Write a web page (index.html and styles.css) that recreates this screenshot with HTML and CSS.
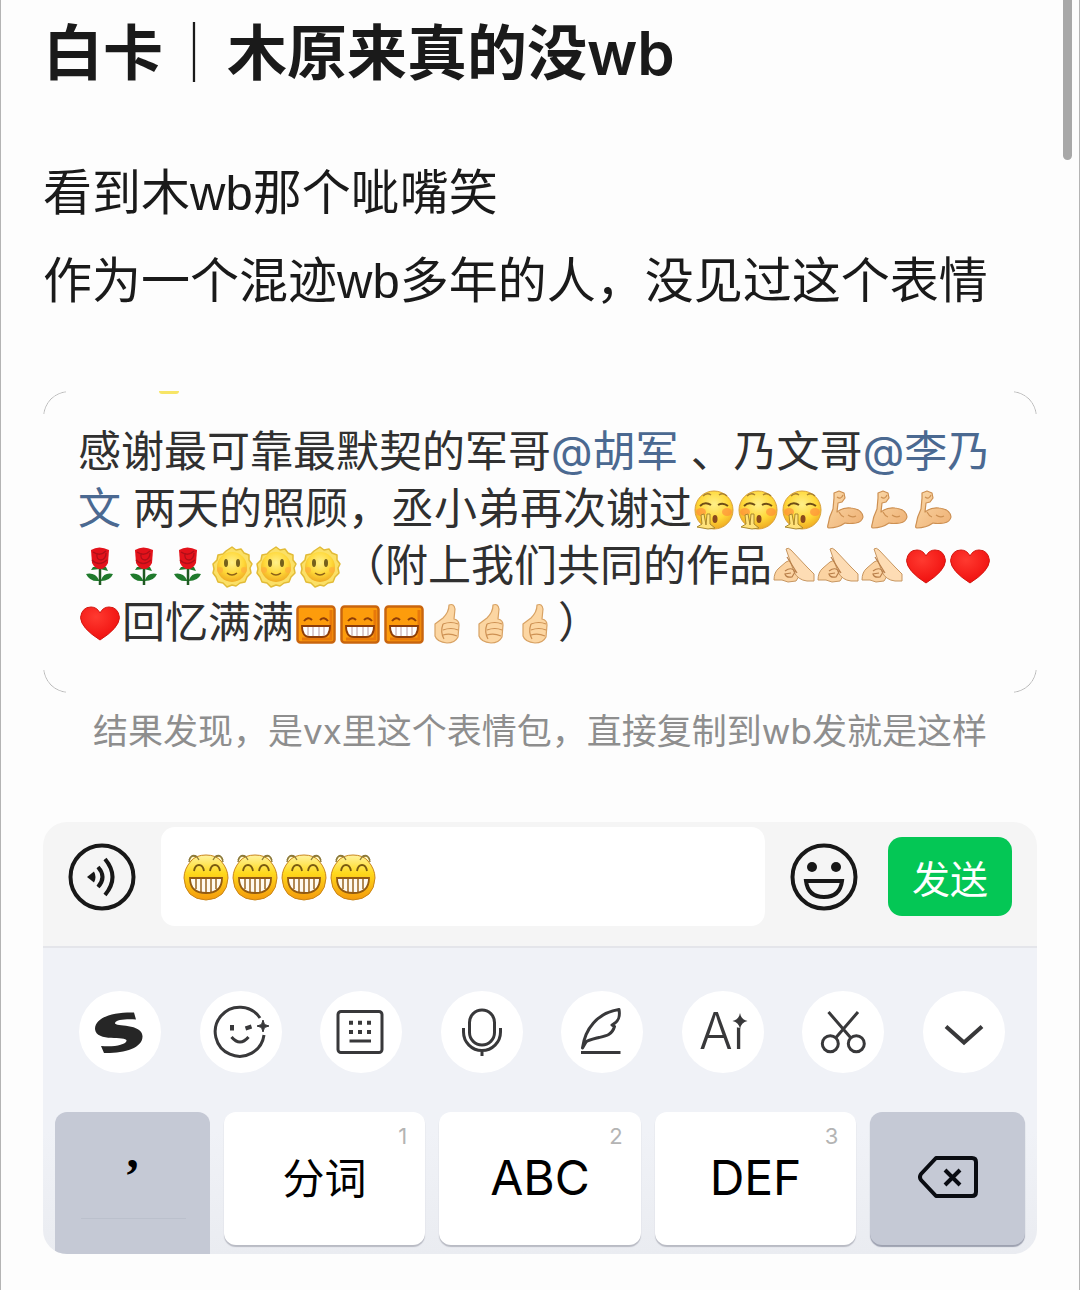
FILE: index.html
```html
<!DOCTYPE html>
<html lang="zh-CN">

<head>
    <meta charset="UTF-8">
    <meta name="viewport" content="width=device-width, initial-scale=1.0">
    <title>白卡｜木原来真的没wb</title>
    <link rel="stylesheet" href="styles.css">
</head>

<body>
    <!-- 表情图形 -->
    <svg class="sprite" aria-hidden="true">
        <defs>
            <radialGradient id="g-face" cx=".5" cy=".35" r=".65">
                <stop offset="0" stop-color="#fff08a" />
                <stop offset=".6" stop-color="#ffd838" />
                <stop offset="1" stop-color="#efaa22" />
            </radialGradient>
            <linearGradient id="g-grin" x1="0" y1="0" x2="0" y2="1">
                <stop offset="0" stop-color="#fff3a0" />
                <stop offset=".4" stop-color="#ffd91c" />
                <stop offset="1" stop-color="#f49a0c" />
            </linearGradient>
            <linearGradient id="g-skin" x1="0" y1="0" x2="1" y2="1">
                <stop offset="0" stop-color="#fbd9a8" />
                <stop offset="1" stop-color="#eeb074" />
            </linearGradient>
            <radialGradient id="g-heart" cx=".4" cy=".3" r=".8">
                <stop offset="0" stop-color="#ff3a30" />
                <stop offset="1" stop-color="#ee0a0a" />
            </radialGradient>
        </defs>
        <symbol id="e-shout" viewBox="0 0 44 44">
            <circle cx="22" cy="22" r="19" fill="url(#g-face)" stroke="#d9a13a" stroke-width="1" />
            <ellipse cx="9" cy="24" rx="5" ry="4" fill="#ff8a3c" opacity=".65" />
            <ellipse cx="35" cy="24" rx="5" ry="4" fill="#ff8a3c" opacity=".65" />
            <path d="M11 8q4-4 8-1M27 7q4-3 8 1" fill="none" stroke="#a9802f" stroke-width="1.5" />
            <path d="M8 18q5-5 11-1M26 17q5-3 10 1" fill="none" stroke="#6d4d16" stroke-width="2" />
            <ellipse cx="23" cy="31" rx="2.5" ry="4" fill="#8a4a1c" />
            <path d="M5 39l5-3-1-9 3-1 2 11 1-11 3 0v10l5 4-7 1z" fill="#ffe27a" stroke="#a9882f" stroke-width="1" />
        </symbol>
        <symbol id="e-arm" viewBox="0 0 44 44">
            <path d="M10 5l5-2 5 2 1 5-3 4-4 1-1 9q6-5 14-4 11 1 12 9-1 5-7 6-7 1-11 0-7 5-16 5-2 0-1-3 1-8 5-16l1-11z" fill="url(#g-skin)" stroke="#cd9052" stroke-width="1.2" stroke-linejoin="round" />
            <path d="M13 9q4 3 6-2M15 24q2 4 5 5M24 27q4 3 8 1" fill="none" stroke="#cd9052" stroke-width="1.2" />
        </symbol>
        <symbol id="e-rose" viewBox="0 0 44 44">
            <path d="M22 24v16" stroke="#1f5a22" stroke-width="2.5" />
            <path d="M21 36q-9 1-13-7 9-2 13 6zM23 36q9 0 12-7-9-2-12 6z" fill="#1f7a2c" />
            <path d="M15 22l-2 3 9-1 8 2-2-4z" fill="#1f7a2c" />
            <path d="M13 5q8-5 18 0l-1 13q-3 6-8 6t-8-6z" fill="#e3121b" />
            <path d="M15 7q7 5 13-1M19 8q-1 7 4 7 5-1 5-7M14 15q7 7 15 0" fill="none" stroke="#b00f18" stroke-width="1.3" />
        </symbol>
        <symbol id="e-sun" viewBox="0 0 44 44">
            <path d="M22 2l4 3 5-1 3 4 5 2v5l3 4-2 4 1 5-4 4-2 5-5 1-4 3-4-1-5 2-4-4-5-1-2-5-3-4 1-4-1-5 4-4 1-5 5-1 3-3z" fill="#fbe067" stroke="#e2bb36" stroke-width="1.5" stroke-linejoin="round" />
            <circle cx="22" cy="22" r="15" fill="url(#g-face)" />
            <ellipse cx="10" cy="25" rx="3" ry="3" fill="#ffae3c" opacity=".7" />
            <ellipse cx="34" cy="25" rx="3" ry="3" fill="#ffae3c" opacity=".7" />
            <ellipse cx="16" cy="18" rx="2" ry="4" fill="#75601c" />
            <ellipse cx="28" cy="18" rx="2" ry="4" fill="#75601c" />
            <path d="M17 28q5 4 10 0" fill="none" stroke="#8d6218" stroke-width="1.5" />
        </symbol>
        <symbol id="e-palm" viewBox="0 0 44 44">
            <path d="M2 35q0-8 5-12l7-6q5-3 9 1l6 10-5 8-8 1-6-2z" fill="#fbd3a2" stroke="#c79660" stroke-width="1" />
            <path d="M14 4q2-2 5 1l16 17 7 7v7h-7q-9-1-13-9z" fill="#fddcb4" stroke="#c79660" stroke-width="1" stroke-linejoin="round" />
            <path d="M13 26q7-5 10 1l-3 5q-6 1-7-3l6-1M15 12l10 16" fill="none" stroke="#b97f4a" stroke-width="1.2" />
        </symbol>
        <symbol id="e-heart" viewBox="0 0 44 44">
            <path d="M22 38Q3 26 2.500 15.500 4 5 13 5q6 0 9 6 3-6 9-6 9 0 10.500 10.500Q41 26 22 38z" fill="url(#g-heart)" stroke="#d3160f" stroke-width="1" />
        </symbol>
        <symbol id="e-box" viewBox="0 0 44 44">
            <rect x="3.500" y="4.500" width="37" height="36" rx="3" fill="#fd9c0c" stroke="#c9650e" stroke-width="2.500" />
            <path d="M37 8v29H8" fill="none" stroke="#e8780a" stroke-width="3" />
            <path d="M10 19q4-5 8-1M26 18q4-4 8 1" fill="none" stroke="#8e3d08" stroke-width="2" />
            <path d="M8 24h28q0 11-8 11H16q-8 0-8-11z" fill="#fff" stroke="#8e3d08" stroke-width="1.800" />
            <path d="M14 25v8M19 25v9M25 25v9M30 25v8" stroke="#b99aa0" stroke-width="1" />
        </symbol>
        <symbol id="e-thumb" viewBox="0 0 44 44">
            <path d="M9 22l8-6q6-6 6-13 5-2 6 4l-1 10q5 1 5 6l-1 12q-3 6-11 6-10-1-12-7z" fill="#fcd6a2" stroke="#d8a264" stroke-width="1.2" stroke-linejoin="round" />
            <path d="M17 22q8-3 15 0M17 28q8-3 15 0M17 33q7-2 14 1M17 22q-3 8 1 15" fill="none" stroke="#cd9052" stroke-width="1.2" />
        </symbol>
        <symbol id="e-grin" viewBox="0 0 46 48">
            <path d="M6 9q1-8 7-6l3 5M40 9q-1-8-7-6l-3 5" fill="#fff6c0" stroke="#8d7a3a" stroke-width="1.500" />
            <path d="M8 8q5-6 15-6t15 6q7 8 7 17-1 21-22 22Q2 46 1 25 1 16 8 8z" fill="url(#g-grin)" stroke="#c9851a" stroke-width="1" />
            <path d="M6 7q2-6 8-3l2 3M40 7q-2-6-8-3l-2 3" fill="none" stroke="#8d7a3a" stroke-width="1.300" />
            <path d="M11 18q1-6 5-6t5 6M27 18q1-6 5-6t5 6" fill="none" stroke="#7a5b10" stroke-width="1.800" />
            <path d="M7 25h32q0 15-16 15T7 25z" fill="#fffaf0" stroke="#925a12" stroke-width="1.800" />
            <path d="M13 26v10M18 26v13M23 26v14M28 26v13M33 26v10" stroke="#925a12" stroke-width="1.400" />
        </symbol>
    </svg>

    <main class="page">
        <div class="scroll-thumb"></div>
        <h1 class="title">白卡<span>｜</span>木原来真的没wb</h1>
        <div class="content">
            <p>看到木wb那个呲嘴笑</p>
            <p>作为一个混迹wb多年的人，没见过这个表情</p>
        </div>

        <!-- 微博截图 -->
        <figure class="quote">
            <blockquote class="quote-card">
                感谢最可靠最默契的军哥<a href="#">@胡军</a> 、乃文哥<a href="#">@李乃<br>文</a> 两天的照顾，丞小弟再次谢过<svg class="emoji"><use href="#e-shout" /></svg><svg class="emoji"><use href="#e-shout" /></svg><svg class="emoji"><use href="#e-shout" /></svg><svg class="emoji"><use href="#e-arm" /></svg><svg class="emoji"><use href="#e-arm" /></svg><svg class="emoji"><use href="#e-arm" /></svg><br>
                <svg class="emoji"><use href="#e-rose" /></svg><svg class="emoji"><use href="#e-rose" /></svg><svg class="emoji"><use href="#e-rose" /></svg><svg class="emoji"><use href="#e-sun" /></svg><svg class="emoji"><use href="#e-sun" /></svg><svg class="emoji"><use href="#e-sun" /></svg>（附上我们共同的作品<svg class="emoji"><use href="#e-palm" /></svg><svg class="emoji"><use href="#e-palm" /></svg><svg class="emoji"><use href="#e-palm" /></svg><svg class="emoji"><use href="#e-heart" /></svg><svg class="emoji"><use href="#e-heart" /></svg><br>
                <svg class="emoji"><use href="#e-heart" /></svg>回忆满满<svg class="emoji"><use href="#e-box" /></svg><svg class="emoji"><use href="#e-box" /></svg><svg class="emoji"><use href="#e-box" /></svg><svg class="emoji"><use href="#e-thumb" /></svg><svg class="emoji"><use href="#e-thumb" /></svg><svg class="emoji"><use href="#e-thumb" /></svg>）
            </blockquote>
            <figcaption>结果发现，是vx里这个表情包，直接复制到wb发就是这样</figcaption>
        </figure>

        <!-- 聊天输入框和键盘 -->
        <section class="panel">
            <div class="chat-bar">
                <button class="round-btn" type="button" aria-label="语音">
                    <svg viewBox="0 0 68 68" fill="none" stroke="#181818" stroke-width="4">
                        <circle cx="34" cy="34" r="31.500" />
                        <path d="M19 34l7-5.500q3 5.500 0 11z" fill="#181818" stroke="none" />
                        <path d="M30 24q9 10 0 20M37 16q15 18 0 36" />
                    </svg>
                </button>
                <label class="field">
                    <svg><use href="#e-grin" /></svg>
                    <svg><use href="#e-grin" /></svg>
                    <svg><use href="#e-grin" /></svg>
                    <svg><use href="#e-grin" /></svg>
                    <input type="text" aria-label="输入消息">
                </label>
                <button class="round-btn" type="button" aria-label="表情">
                    <svg viewBox="0 0 68 68" fill="none" stroke="#181818" stroke-width="4">
                        <circle cx="34" cy="34" r="31.500" />
                        <circle cx="22" cy="24" r="5" fill="#181818" stroke="none" />
                        <circle cx="46" cy="24" r="5" fill="#181818" stroke="none" />
                        <path d="M16 38h36q-2 16-18 16T16 38z" />
                    </svg>
                </button>
                <button class="send" type="button">发送</button>
            </div>

            <div class="keyboard">
                <div class="tools">
                    <button type="button" aria-label="搜狗">
                        <svg viewBox="0 0 82 82"><path d="M55 21.500L57 28.500C47 28 37 28.500 36 32 35 36 63 32 63.500 45 64 57 45 62.500 25 62L22 55C36 56 46 54 47.500 50 49 44 17 52 16 38 16 26 35 21 55 21.500z" fill="#262626" /></svg>
                    </button>
                    <button type="button" aria-label="表情包">
                        <svg class="line" viewBox="0 0 82 82">
                            <path d="M60 27A24.500 24.500 0 1 0 64 44" />
                            <path d="M32 34v5.500M45.500 37.500l6-2" stroke-width="4" />
                            <path d="M31.500 46q8.500 10 17 0" />
                            <path d="M63 29l1.500 4.500 4.500 1.500-4.500 1.500-1.500 4.500-1.500-4.500-4.500-1.500 4.500-1.500z" fill="#38383a" stroke-width="1" />
                        </svg>
                    </button>
                    <button type="button" aria-label="键盘">
                        <svg class="line" viewBox="0 0 82 82">
                            <rect x="18" y="20.500" width="44" height="41" rx="3" />
                            <path d="M29 31.700h4M38 31.700h4M47 31.700h4M29 41h4M38 41h4M47 41h4" stroke-width="4" />
                            <path d="M29.500 50h21.500" />
                        </svg>
                    </button>
                    <button type="button" aria-label="语音输入">
                        <svg class="line" viewBox="0 0 82 82">
                            <rect x="28.500" y="19" width="25" height="35" rx="12.500" />
                            <path d="M22.500 37v4a18.500 18.500 0 0 0 37 0v-4M41 59.500v5.500" />
                        </svg>
                    </button>
                    <button type="button" aria-label="手写">
                        <svg class="line" viewBox="0 0 82 82">
                            <path d="M21.500 57C24 38 36 22 58 18.500 59.500 27 57 31 51 34l2.500 1.500C51 44 45 45 38 46.500 32 48 27 49 25 51z" stroke-linejoin="round" />
                            <path d="M20 61.500h39.500" />
                        </svg>
                    </button>
                    <button type="button" aria-label="Ai">
                        <svg viewBox="0 0 82 82">
                            <text class="ai-text" x="17" y="58">Ai</text>
                            <circle cx="58" cy="28" r="9" fill="#fff" />
                            <path d="M58 22q1 6.500 7.500 8-6.500 1.500-7.500 8-1-6.500-7.500-8 6.500-1.500 7.500-8z" fill="#38383a" />
                        </svg>
                    </button>
                    <button type="button" aria-label="剪切">
                        <svg class="line" viewBox="0 0 82 82">
                            <circle cx="28.300" cy="52.700" r="8" />
                            <circle cx="54.300" cy="52.700" r="8" />
                            <path d="M26.500 21l22 25.500M56 21L34 46.500" />
                        </svg>
                    </button>
                    <button type="button" aria-label="收起">
                        <svg class="line" viewBox="0 0 82 82"><path d="M23 35.500l18 16 18-16" stroke-width="4" /></svg>
                    </button>
                </div>
                <div class="keys">
                    <button class="key key-comma" type="button">’</button>
                    <button class="key key-cn" type="button">分词<small>1</small></button>
                    <button class="key" type="button">ABC<small>2</small></button>
                    <button class="key" type="button">DEF<small>3</small></button>
                    <button class="key key-gray" type="button" aria-label="删除">
                        <svg viewBox="0 0 60 44" fill="none" stroke="#0a0c12" stroke-width="4" stroke-linejoin="round">
                            <path d="M18 3h36q4 0 4 4v30q0 4-4 4H18L3 25q-2-3 0-6z" />
                            <path d="M27 15l15 15M42 15L27 30" />
                        </svg>
                    </button>
                </div>
            </div>
        </section>
    </main>
</body>

</html>
```
FILE: styles.css
```css
* {
    margin: 0;
    padding: 0;
    box-sizing: border-box;
}

body {
    font-family: Inter, "Noto Sans CJK SC", sans-serif;
    color: #1a1a1a;
    background-color: #fdfdfd;
}

a {
    text-decoration: none;
    color: #4b6991;
}

button,
input {
    border: none;
    outline: none;
    background: none;
    font-family: inherit;
    color: inherit;
}

.sprite {
    position: absolute;
    width: 0;
    height: 0;
}

.page {
    position: relative;
    min-height: 100vh;
    padding: 17px 42px 36px;
    border-left: 1px solid #b4b4b4;
    border-right: 1px solid #b4b4b4;
}
/* 滚动条 */

.scroll-thumb {
    position: absolute;
    top: 0;
    right: 7px;
    width: 9px;
    height: 160px;
    background-color: #a8a8a8;
    border-radius: 0 0 5px 5px;
}
/* 标题和正文 */

.title {
    font-size: 60px;
    font-weight: 600;
    line-height: 72px;
}

.title span {
    padding: 0 3px 0 1px;
    font-weight: 300;
}

.content {
    margin-top: 60px;
    font-family: "Liberation Sans", "Noto Sans CJK SC", sans-serif;
    font-size: 49px;
    line-height: 88px;
}
/* 微博截图 */

.quote {
    margin-top: 66px;
}

.quote-card {
    position: relative;
    padding: 32px 0 42px 35px;
    font-size: 43px;
    line-height: 57px;
    color: #303030;
    white-space: nowrap;
}
/* 只露出四个圆角的边线 */

.quote-card::before {
    content: "";
    position: absolute;
    inset: 0;
    border: 1px solid #b8b8b8;
    border-radius: 26px;
    pointer-events: none;
    mask-image: linear-gradient(#000, #000), linear-gradient(#000, #000), linear-gradient(#000, #000), linear-gradient(#000, #000);
    mask-position: left top, right top, left bottom, right bottom;
    mask-size: 23px 23px;
    mask-repeat: no-repeat;
}
/* 上一行表情露出的一点 */

.quote-card::after {
    content: "";
    position: absolute;
    top: 0;
    left: 116px;
    width: 20px;
    height: 3px;
    background-color: #f7e566;
    border-radius: 0 0 10px 10px;
}

.emoji {
    width: 44px;
    height: 44px;
    vertical-align: -8px;
}

.quote figcaption {
    margin-top: 16px;
    font-size: 35px;
    line-height: 44px;
    text-align: center;
    color: #8e8e8e;
}
/* 输入面板 */

.panel {
    margin-top: 69px;
    border-radius: 24px;
    overflow: hidden;
}

.chat-bar {
    display: flex;
    align-items: center;
    padding: 5px 25px 20px;
    background-color: #f5f5f5;
    border-bottom: 2px solid #e4e5ea;
}

.round-btn {
    width: 68px;
    height: 68px;
}

.round-btn svg {
    display: block;
    width: 68px;
    height: 68px;
}

.field {
    display: flex;
    flex: 1;
    align-items: center;
    gap: 3px;
    min-width: 0;
    height: 99px;
    margin: 0 25px;
    padding: 0 22px;
    background-color: #fff;
    border-radius: 14px;
}

.field svg {
    flex: none;
    width: 46px;
    height: 48px;
}

.field input {
    flex: 1;
    min-width: 0;
    height: 60px;
    font-size: 43px;
}

.send {
    width: 124px;
    height: 79px;
    margin-left: 30px;
    font-size: 38px;
    color: #fff;
    background-color: #04c755;
    border-radius: 14px;
}
/* 键盘 */

.keyboard {
    padding-top: 43px;
    background-image: linear-gradient(#f0f2f7 60%, #eaecf1);
}

.tools {
    display: flex;
    justify-content: space-between;
    padding: 0 32px 0 36px;
}

.tools button {
    width: 82px;
    height: 82px;
    background-color: #fff;
    border-radius: 50%;
}

.tools svg {
    display: block;
    width: 82px;
    height: 82px;
}

.line {
    fill: none;
    stroke: #38383a;
    stroke-width: 3px;
}

.ai-text {
    font-size: 50px;
    font-weight: 300;
    fill: #38383a;
}

.keys {
    display: grid;
    grid-template-columns: 155fr 202fr 202fr 202fr 155fr;
    gap: 14px;
    margin-top: 39px;
    padding: 0 12px 9px;
}

.key {
    position: relative;
    height: 133px;
    padding-bottom: 3px;
    font-size: 48px;
    color: #000;
    background-color: #fff;
    border-radius: 12px;
    box-shadow: 0 2px 1px #b9bbc4;
}

.key small {
    position: absolute;
    top: 10px;
    right: 18px;
    font-size: 22px;
    line-height: 28px;
    color: #b4b4b4;
}

.key svg {
    display: block;
    width: 60px;
    height: 44px;
    margin: 0 auto;
}

.key-cn {
    padding-bottom: 6px;
    font-size: 42px;
}

.key-gray,
.key-comma {
    background-color: #c5c9d5;
    box-shadow: 0 2px 1px #9da1b0;
}

.key-comma {
    height: auto;
    margin-bottom: -9px;
    padding-bottom: 16px;
    font-family: "Liberation Serif", serif;
    font-weight: 700;
    border-radius: 12px 12px 0 0;
    box-shadow: none;
}
/* 逗号键下面的细线 */

.key-comma::after {
    content: "";
    position: absolute;
    left: 26px;
    right: 24px;
    bottom: 35px;
    border-bottom: 1px solid #bbc0cc;
}
```
